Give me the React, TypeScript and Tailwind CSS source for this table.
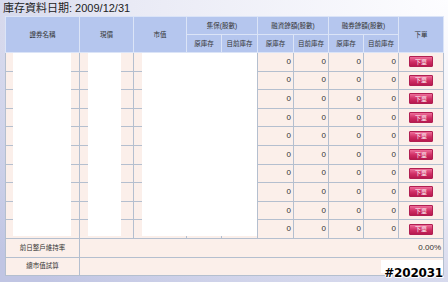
import React from 'react'

const rows = Array.from({ length: 10 }, (_, i) => i)

const font = { fontFamily: '"Liberation Sans", "Noto Sans CJK TC", sans-serif' }

function OrderButton() {
  return (
    <span className="inline-flex items-center justify-center w-[24px] h-[11px] rounded-[1px] border border-[#b01f52] bg-[linear-gradient(#ee6f9a,#cf2d64_55%,#b8194f)] text-white text-[6px] leading-none">
      下單
    </span>
  )
}

export default function App() {
  return (
    <div
      className="w-[448px] h-[282px] overflow-hidden bg-[radial-gradient(ellipse_at_top_right,#fdfdff_0%,#e9eaf5_50%,#c0c5e3_95%)] text-[#333]"
      style={font}
    >
      <div className="pl-[3px] pt-[1px] h-[16px] text-[11px] leading-[14px] text-[#222]">庫存資料日期: 2009/12/31</div>

      <div className="relative ml-[5px] w-[438px]">
        <table className="w-[438px] border-collapse table-fixed text-[6.5px]">
          <colgroup>
            <col className="w-[74px]" />
            <col className="w-[54px]" />
            <col className="w-[53px]" />
            <col className="w-[35px]" />
            <col className="w-[36px]" />
            <col className="w-[36px]" />
            <col className="w-[35px]" />
            <col className="w-[35px]" />
            <col className="w-[35px]" />
            <col className="w-[45px]" />
          </colgroup>
          <thead className="bg-[#b5c6ee] text-[#333]">
            <tr className="h-[18px]">
              <th rowSpan={2} className="border border-[#dbe4f7] font-normal">證券名稱</th>
              <th rowSpan={2} className="border border-[#dbe4f7] font-normal">現價</th>
              <th rowSpan={2} className="border border-[#dbe4f7] font-normal">市值</th>
              <th colSpan={2} className="border border-[#dbe4f7] font-normal">集保(股數)</th>
              <th colSpan={2} className="border border-[#dbe4f7] font-normal">融資餘額(股數)</th>
              <th colSpan={2} className="border border-[#dbe4f7] font-normal">融券餘額(股數)</th>
              <th rowSpan={2} className="border border-[#dbe4f7] font-normal">下單</th>
            </tr>
            <tr className="h-[18px]">
              <th className="border border-[#dbe4f7] font-normal">原庫存</th>
              <th className="border border-[#dbe4f7] font-normal">目前庫存</th>
              <th className="border border-[#dbe4f7] font-normal">原庫存</th>
              <th className="border border-[#dbe4f7] font-normal">目前庫存</th>
              <th className="border border-[#dbe4f7] font-normal">原庫存</th>
              <th className="border border-[#dbe4f7] font-normal">目前庫存</th>
            </tr>
          </thead>
          <tbody className="bg-[#fbefea] text-[8px]">
            {rows.map(i => (
              <tr key={i} className="h-[18.6px]">
                <td className="border border-[#b4bfcf]"></td>
                <td className="border border-[#b4bfcf]"></td>
                <td className="border border-[#b4bfcf]"></td>
                <td className="border border-[#b4bfcf]"></td>
                <td className="border border-[#b4bfcf]"></td>
                <td className="border border-[#b4bfcf] text-right pr-[2px]">0</td>
                <td className="border border-[#b4bfcf] text-right pr-[2px]">0</td>
                <td className="border border-[#b4bfcf] text-right pr-[2px]">0</td>
                <td className="border border-[#b4bfcf] text-right pr-[2px]">0</td>
                <td className="border border-[#b4bfcf] text-center">
                  <OrderButton />
                </td>
              </tr>
            ))}
            <tr className="h-[18.6px]">
              <td className="border border-[#b4bfcf] text-center text-[6.5px]">前日整戶維持率</td>
              <td colSpan={9} className="border border-[#b4bfcf] text-right pr-[2px]">0.00%</td>
            </tr>
            <tr className="h-[18.6px]">
              <td className="border border-[#b4bfcf] text-center text-[6.5px]">總市值試算</td>
              <td colSpan={9} className="border border-[#b4bfcf] text-right">
                <div className="ml-auto w-[62px] h-[13px] bg-white"></div>
              </td>
            </tr>
          </tbody>
        </table>

        {/* white input-like blocks lying over the data rows */}
        <div className="absolute left-[8px] top-[37px] w-[58px] h-[183px] bg-white" />
        <div className="absolute left-[83px] top-[37px] w-[33px] h-[183px] bg-white" />
        <div className="absolute left-[137px] top-[37px] w-[115px] h-[183px] bg-white" />

        <div
          className="absolute right-[0px] bottom-[-6px] text-[12px] font-bold text-black tracking-[-0.2px] [text-shadow:1px_0_0_#fff,-1px_0_0_#fff,0_1px_0_#fff,0_-1px_0_#fff,1px_1px_0_#fff,-1px_-1px_0_#fff]"
          style={{ fontFamily: '"DejaVu Sans", sans-serif' }}
        >
          #202031
        </div>
      </div>
    </div>
  )
}
